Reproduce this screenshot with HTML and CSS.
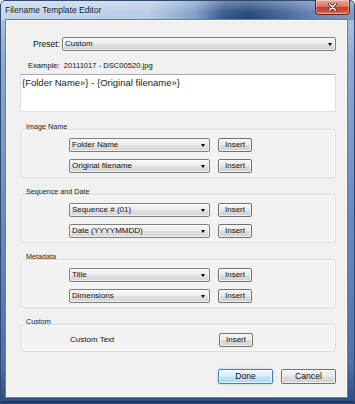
FILE: index.html
```html
<!DOCTYPE html>
<html>
<head>
<meta charset="utf-8">
<title>Filename Template Editor</title>
<link rel="stylesheet" href="styles.css">
</head>
<body>
<div class="window">
  <div class="titlebar">
    <span class="title">Filename Template Editor</span>
    <div class="close">
      <svg width="9" height="8" viewBox="0 0 9 8">
        <path d="M1.5 1 L7.5 7 M7.5 1 L1.5 7" stroke="#5a1c14" stroke-width="3" stroke-linecap="round"/>
        <path d="M1.5 1 L7.5 7 M7.5 1 L1.5 7" stroke="#ffffff" stroke-width="1.6" stroke-linecap="round"/>
      </svg>
    </div>
  </div>
  <div class="client">
    <div class="preset-row">
      <span class="preset-label">Preset:</span>
      <div class="select select-wide"><span class="select-text">Custom</span><i class="arrow"></i></div>
    </div>
    <div class="example">Example:&nbsp; 20111017 - DSC00520.jpg</div>
    <div class="template">{Folder Name»} - {Original filename»}</div>

    <section class="group group-first">
      <div class="group-label">Image Name</div>
      <div class="group-box">
        <div class="row"><div class="select"><span class="select-text">Folder Name</span><i class="arrow"></i></div><button class="btn">Insert</button></div>
        <div class="row"><div class="select"><span class="select-text">Original filename</span><i class="arrow"></i></div><button class="btn">Insert</button></div>
      </div>
    </section>

    <section class="group">
      <div class="group-label">Sequence and Date</div>
      <div class="group-box">
        <div class="row"><div class="select"><span class="select-text">Sequence # (01)</span><i class="arrow"></i></div><button class="btn">Insert</button></div>
        <div class="row"><div class="select"><span class="select-text">Date (YYYYMMDD)</span><i class="arrow"></i></div><button class="btn">Insert</button></div>
      </div>
    </section>

    <section class="group">
      <div class="group-label">Metadata</div>
      <div class="group-box">
        <div class="row"><div class="select"><span class="select-text">Title</span><i class="arrow"></i></div><button class="btn">Insert</button></div>
        <div class="row"><div class="select"><span class="select-text">Dimensions</span><i class="arrow"></i></div><button class="btn">Insert</button></div>
      </div>
    </section>

    <section class="group">
      <div class="group-label">Custom</div>
      <div class="group-box">
        <div class="row"><span class="custom-text">Custom Text</span><button class="btn">Insert</button></div>
      </div>
    </section>

    <div class="actions">
      <button class="btn btn-big btn-default">Done</button>
      <button class="btn btn-big">Cancel</button>
    </div>
  </div>
</div>
</body>
</html>
```

FILE: styles.css
```css
html, body {
  margin: 0;
  padding: 0;
  background: #ffffff;
}

body {
  font-family: "Liberation Sans", Arial, sans-serif;
  font-size: 8px;
  color: #111111;
}

.window {
  width: 355px;
  height: 404px;
  box-sizing: border-box;
  display: flex;
  flex-direction: column;
  padding: 0 8px 7px 6px;
  border-radius: 5px 5px 0 0;
  background:
    linear-gradient(180deg, rgba(255,255,255,0.35) 0px, rgba(255,255,255,0.05) 12px, rgba(255,255,255,0) 20px) top / 100% 20px no-repeat,
    linear-gradient(90deg, #c3d6ed 0%, #b6cbe6 42%, #7f9dc8 55%, #35568b 63%, #24447a 70%, #3f6194 79%, #6a89b8 90%, #7a97c2 100%) top / 100% 20px no-repeat,
    linear-gradient(180deg, #b7cbe5 0px, #8eaad3 60px, #6b8ec4 200px, #4d72aa 360px, #2d4d82 404px);
  box-shadow: inset 0 0 0 1px #2f4a76, inset 0 -3px 0 #1d3866;
  overflow: hidden;
}

.titlebar {
  height: 20px;
  display: flex;
  align-items: flex-start;
  margin: 0 -3px 0 -6px;
}

.title {
  padding: 5px 0 0 5px;
  font-size: 8.5px;
  line-height: 10px;
  color: #0b1424;
  text-shadow: 0 0 4px rgba(255,255,255,0.9);
}

.close {
  margin-left: auto;
  width: 35px;
  height: 15px;
  box-sizing: border-box;
  display: flex;
  align-items: center;
  justify-content: center;
  border: 1px solid #6b2219;
  border-top: none;
  border-radius: 0 0 4px 4px;
  background: linear-gradient(180deg, #e9a99d 0%, #d77a69 45%, #c2432f 52%, #cb4c36 80%, #e0876f 100%);
  box-shadow: inset 0 0 0 1px rgba(255,255,255,0.35);
}

.client {
  flex: 1;
  display: flex;
  flex-direction: column;
  background: #f0f0f0;
  border: 1px solid #ffffff;
  box-shadow: 0 0 0 1px #5f7ca6;
  padding: 16px 10px 0 13px;
}

.preset-row {
  display: flex;
  align-items: center;
  height: 14px;
}

.preset-label {
  width: 40px;
  text-align: right;
  margin-right: 2px;
  font-size: 8.5px;
}

.select {
  width: 141px;
  height: 14px;
  box-sizing: border-box;
  display: flex;
  align-items: center;
  padding: 0 4px 0 2px;
  border: 1px solid #7e7e7e;
  border-radius: 2px;
  background: linear-gradient(180deg, #f6f6f6 0%, #ededed 48%, #e0e0e0 52%, #d5d5d5 100%);
  box-shadow: inset 0 0 0 1px rgba(255,255,255,0.6);
}

.select-wide {
  flex: 1;
  width: auto;
  padding-right: 3px;
}

.select-text {
  font-size: 8px;
  line-height: 12px;
  white-space: nowrap;
}

.arrow {
  margin-left: auto;
  width: 0;
  height: 0;
  border-left: 2.5px solid transparent;
  border-right: 2.5px solid transparent;
  border-top: 3px solid #000000;
}

.example {
  margin-top: 10px;
  padding-left: 8px;
  line-height: 10px;
  font-size: 7.6px;
}

.template {
  margin-top: 3px;
  height: 38px;
  box-sizing: border-box;
  background: #ffffff;
  border: 1px solid #dde1e7;
  border-top-color: #abadb3;
  padding: 2px 1px;
  font-size: 9.5px;
  line-height: 12px;
  color: #1a1a1a;
}

.group {
  margin-top: 9px;
  display: flex;
  flex-direction: column;
  margin-left: 1px;
}

.group-first {
  margin-top: 10px;
}

.group-label {
  position: relative;
  z-index: 1;
  padding-left: 5px;
  line-height: 10px;
  height: 10px;
  margin-bottom: -3px;
  font-size: 7.2px;
  color: #222222;
}

.group-box {
  display: flex;
  flex-direction: column;
  gap: 7px;
  padding: 8px 0 4px 47px;
  border: 1px solid #dcdcdc;
  border-radius: 3px;
  background: #f2f2f2;
  box-shadow: inset 0 0 0 1px #fafafa;
}

.row {
  display: flex;
  align-items: center;
  gap: 8px;
  height: 14px;
}

.custom-text {
  width: 141px;
  font-size: 8px;
  line-height: 14px;
  padding-left: 1px;
}

.btn {
  width: 34px;
  height: 14px;
  box-sizing: border-box;
  margin: 0;
  padding: 0;
  font-family: "Liberation Sans", Arial, sans-serif;
  font-size: 8px;
  line-height: 12px;
  color: #111111;
  border: 1px solid #707070;
  border-radius: 2px;
  background: linear-gradient(180deg, #f4f4f4 0%, #ebebeb 48%, #dddddd 52%, #d0d0d0 100%);
  box-shadow: inset 0 0 0 1px rgba(255,255,255,0.7);
}

.actions {
  margin-top: 17px;
  display: flex;
  justify-content: flex-end;
  gap: 8px;
}

.btn-big {
  width: 55px;
  height: 15px;
  font-size: 8.6px;
  line-height: 13px;
}

.btn-default {
  border-color: #3c7fb1;
  background: linear-gradient(180deg, #eaf6fd 0%, #d9f0fc 48%, #bee6fd 52%, #a7d9f5 100%);
  box-shadow: inset 0 0 0 1px rgba(255,255,255,0.8), 0 0 2px rgba(80,160,220,0.5);
}
```
